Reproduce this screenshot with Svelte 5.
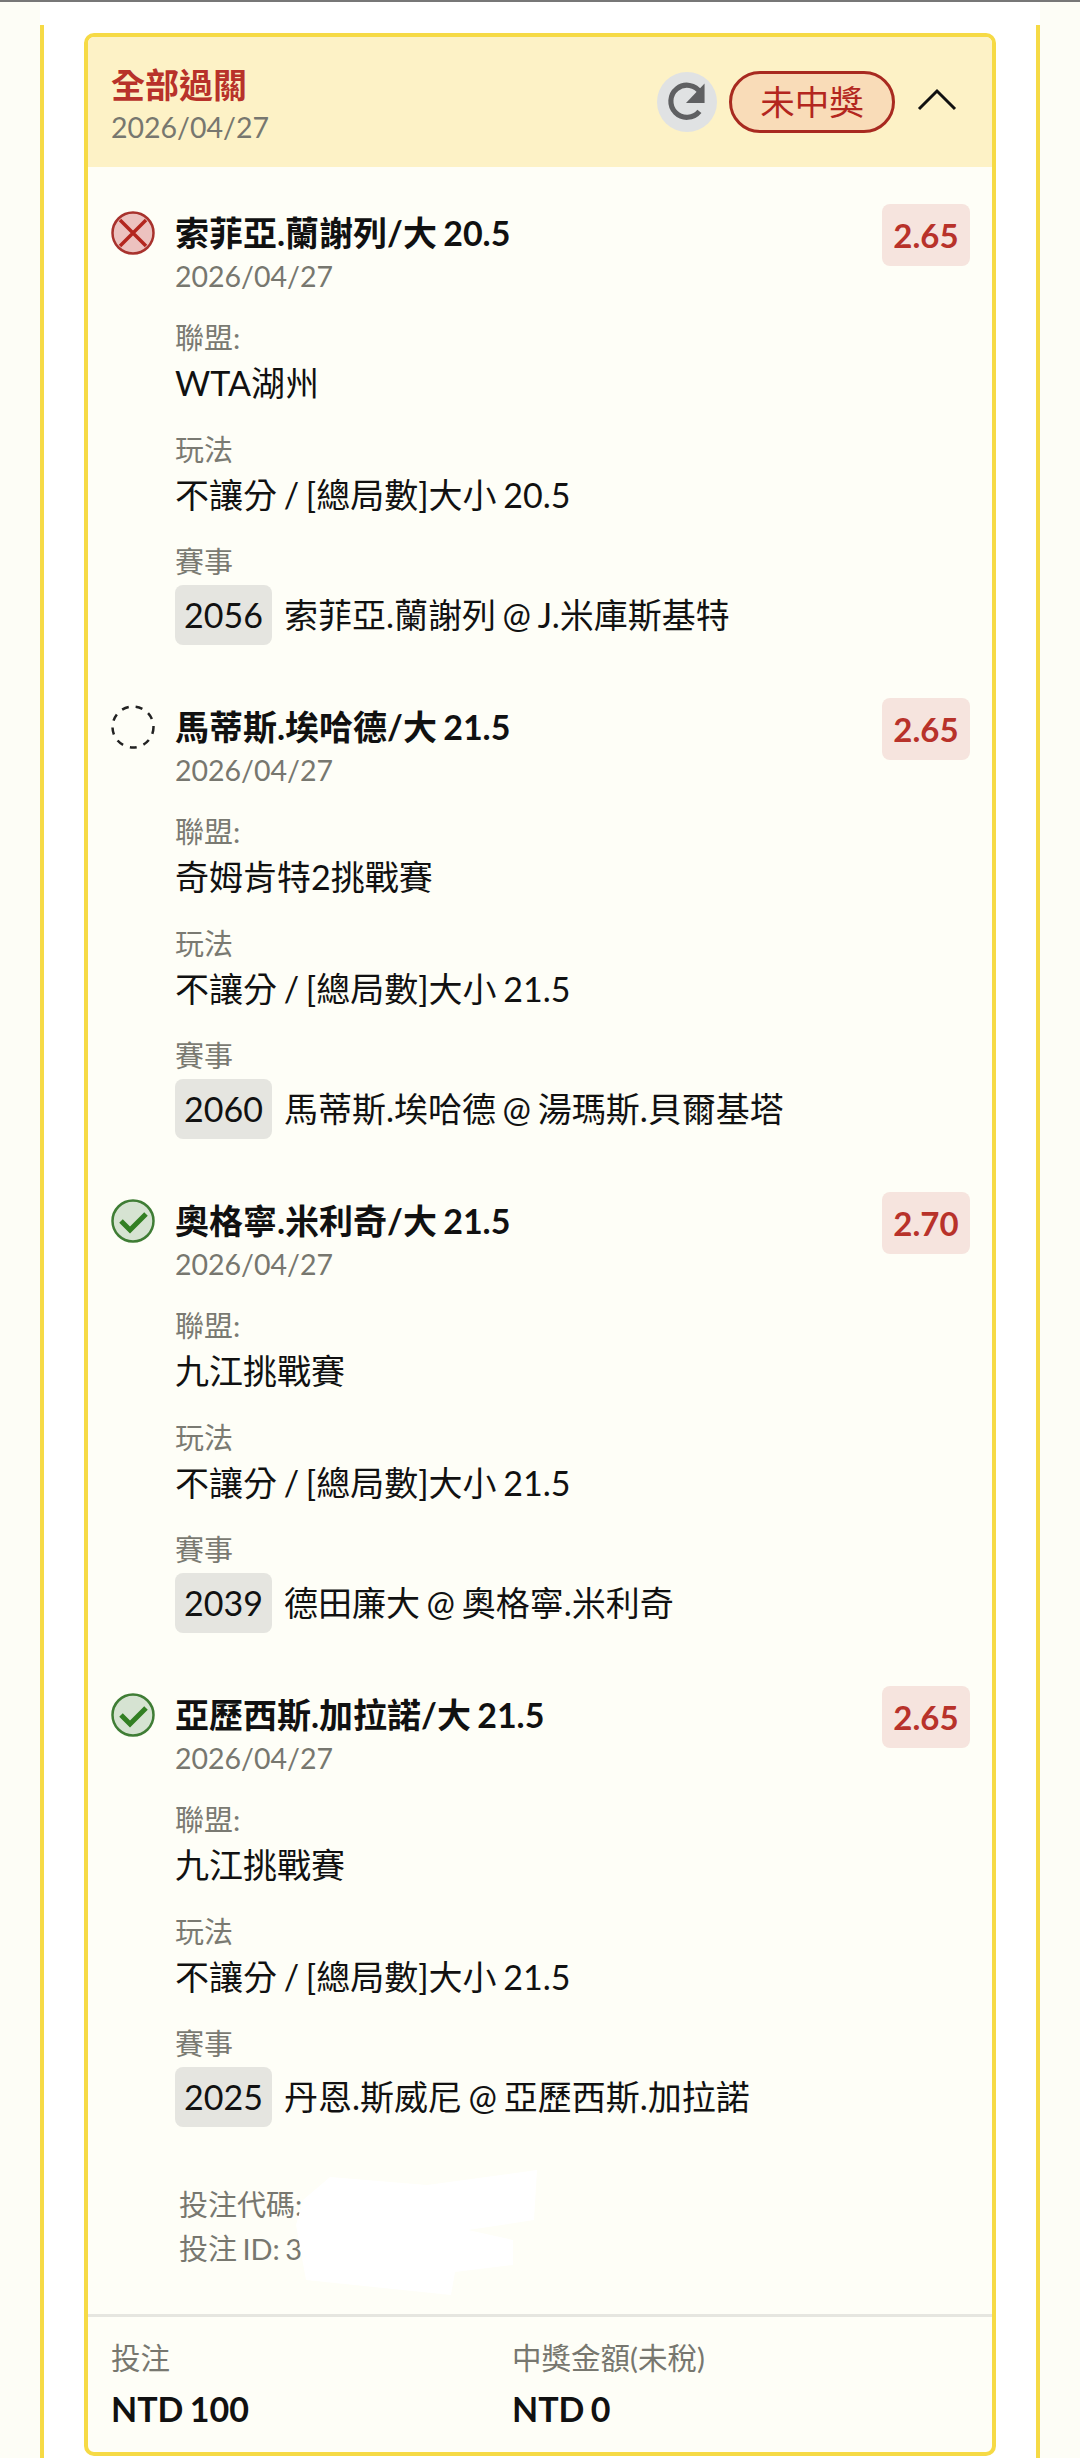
<script>
  const legs = [
    { status: 'lose', title: '索菲亞.蘭謝列/大 20.5', odds: '2.65', league: 'WTA湖州', play: '不讓分 / [總局數]大小 20.5', id: '2056', match: '索菲亞.蘭謝列 @ J.米庫斯基特' },
    { status: 'pending', title: '馬蒂斯.埃哈德/大 21.5', odds: '2.65', league: '奇姆肯特2挑戰賽', play: '不讓分 / [總局數]大小 21.5', id: '2060', match: '馬蒂斯.埃哈德 @ 湯瑪斯.貝爾基塔' },
    { status: 'win', title: '奧格寧.米利奇/大 21.5', odds: '2.70', league: '九江挑戰賽', play: '不讓分 / [總局數]大小 21.5', id: '2039', match: '德田廉大 @ 奧格寧.米利奇' },
    { status: 'win', title: '亞歷西斯.加拉諾/大 21.5', odds: '2.65', league: '九江挑戰賽', play: '不讓分 / [總局數]大小 21.5', id: '2025', match: '丹恩.斯威尼 @ 亞歷西斯.加拉諾' }
  ];
</script>

<div class="page">
  <div class="panel">
    <section class="card">
      <header class="head">
        <div>
          <div class="type">全部過關</div>
          <div class="date">2026/04/27</div>
        </div>
        <div class="actions">
          <span class="refresh">
            <svg viewBox="0 0 58 58" width="60" height="60"><path d="M41 38a15.5 15.5 0 1 1 1-18" fill="none" stroke="#5f6062" stroke-width="5"/><path d="M46 11v19H28z" fill="#5f6062"/></svg>
          </span>
          <span class="badge">未中獎</span>
          <svg class="chev" viewBox="0 0 40 24" width="40" height="24"><path d="M2 21 20 3l18 18" fill="none" stroke="#111" stroke-width="3"/></svg>
        </div>
      </header>

      <div class="legs">
        {#each legs as leg}
          <article class="leg">
            <div class="icon">
              {#if leg.status === 'lose'}
                <svg viewBox="0 0 44 44" width="44" height="44"><circle cx="22" cy="22" r="20.5" fill="#ecc2bf" stroke="#a8322d" stroke-width="2.5"/><path d="M9 9l26 26M35 9 9 35" stroke="#b3261e" stroke-width="3.5" fill="none"/></svg>
              {:else if leg.status === 'win'}
                <svg viewBox="0 0 44 44" width="44" height="44"><circle cx="22" cy="22" r="20.5" fill="#d6e3d2" stroke="#3f7d35" stroke-width="2.5"/><path d="M10 22l9 9 16-16" stroke="#327f23" stroke-width="5" fill="none"/></svg>
              {:else}
                <svg viewBox="0 0 44 44" width="44" height="44"><circle cx="22" cy="22" r="20.5" fill="none" stroke="#222" stroke-width="2.5" stroke-dasharray="7 7.1"/></svg>
              {/if}
            </div>
            <div class="main">
              <div class="title-row">
                <div>
                  <h3>{leg.title}</h3>
                  <div class="date">2026/04/27</div>
                </div>
                <span class="odds">{leg.odds}</span>
              </div>
              <div class="label">聯盟:</div>
              <div class="value">{leg.league}</div>
              <div class="label">玩法</div>
              <div class="value">{leg.play}</div>
              <div class="label">賽事</div>
              <div class="match"><span class="num">{leg.id}</span><span>{leg.match}</span></div>
            </div>
          </article>
        {/each}
      </div>

      <div class="codes">
        <div>投注代碼:</div>
        <div>投注 ID: 3</div>
        <div class="mask"></div>
      </div>

      <footer class="foot">
        <div class="col">
          <div class="f-label">投注</div>
          <div class="f-value">NTD 100</div>
        </div>
        <div class="col">
          <div class="f-label">中獎金額(未稅)</div>
          <div class="f-value">NTD 0</div>
        </div>
      </footer>
    </section>
  </div>
</div>

<style>
  :global(body) {
    margin: 0;
    background: #fff;
  }
  .page {
    height: 2458px;
    box-sizing: border-box;
    overflow: hidden;
    border-top: 2px solid #777;
    padding-top: 23px;
    font-family: Lato, "Noto Sans CJK TC", sans-serif;
    color: #111;
    word-spacing: -2px;
    background: linear-gradient(90deg, #fdfdf6 40px, #fff 40px, #fff 1040px, #fdfdf6 1040px);
  }
  .panel {
    margin: 0 40px;
    padding: 8px 40px 0;
    border-left: 4px solid #f6da45;
    border-right: 4px solid #f6da45;
    height: 2440px;
    box-sizing: border-box;
    background: #fff;
  }
  .card {
    height: 2423px;
    box-sizing: border-box;
    border: 4px solid #f6da45;
    border-radius: 10px;
    background: #fefef7;
    display: flex;
    flex-direction: column;
  }
  .head {
    height: 130px;
    flex: none;
    box-sizing: border-box;
    padding: 26px 35px 0 23px;
    background: #fdf2c6;
    display: flex;
    justify-content: space-between;
    align-items: flex-start;
    border-radius: 6px 6px 0 0;
  }
  .type {
    font-size: 34px;
    line-height: 44px;
    font-weight: 700;
    color: #b8322a;
  }
  .date {
    font-size: 28.5px;
    line-height: 36px;
    color: #77776f;
    margin-top: 3px;
  }
  .head .date {
    margin-top: 2px;
  }
  .actions {
    display: flex;
    align-items: center;
    gap: 12px;
    margin-top: 8px;
  }
  .refresh {
    width: 60px;
    height: 60px;
    border-radius: 50%;
    background: #e0e2e3;
    display: block;
  }
  .refresh svg {
    display: block;
  }
  .badge {
    width: 166px;
    height: 62px;
    box-sizing: border-box;
    border: 3px solid #a82a20;
    border-radius: 31px;
    background: #f9dcb8;
    color: #b3261e;
    font-size: 34.5px;
    line-height: 56px;
    text-align: center;
  }
  .chev {
    margin: -5px 0 0 10px;
  }
  .legs {
    padding: 36px 0 0 23px;
    display: flex;
    flex-direction: column;
    gap: 36px;
  }
  .leg {
    display: flex;
    gap: 20px;
    height: 458px;
  }
  .icon {
    flex: none;
    width: 44px;
    padding-top: 8px;
  }
  .icon svg {
    display: block;
  }
  .main {
    flex: 1;
    padding-right: 22px;
  }
  .title-row {
    display: flex;
    justify-content: space-between;
    align-items: flex-start;
    height: 90px;
  }
  h3 {
    margin: 8px 0 0;
    font-size: 34px;
    line-height: 44px;
    font-weight: 700;
  }
  .odds {
    width: 88px;
    height: 62px;
    margin-top: 1px;
    background: #f6e4de;
    color: #b8322a;
    border-radius: 8px;
    font-size: 33px;
    font-weight: 700;
    line-height: 62px;
    text-align: center;
  }
  .label {
    margin-top: 25px;
    font-size: 29px;
    line-height: 40px;
    color: #7a7a72;
  }
  .value {
    margin-top: 3px;
    font-size: 34px;
    line-height: 44px;
  }
  .match {
    margin-top: 3px;
    display: flex;
    align-items: center;
    gap: 12px;
    font-size: 34px;
    line-height: 44px;
  }
  .num {
    background: #e5e5e0;
    border-radius: 8px;
    padding: 8px 9px;
  }
  .codes {
    position: relative;
    margin-top: 26px;
    padding: 14px 0 0 91px;
    font-size: 29px;
    line-height: 44px;
    color: #77776f;
    height: 145px;
    box-sizing: border-box;
  }
  .mask {
    position: absolute;
    left: 208px;
    top: 1px;
    width: 241px;
    height: 125px;
    background: #fff;
    clip-path: polygon(34px 7px, 131px 15px, 241px 0, 238px 50px, 172px 60px, 217px 70px, 217px 95px, 159px 102px, 155px 125px, 10px 110px, 0 55px, 7px 30px);
  }
  .foot {
    flex: 1;
    border-top: 3px solid #e6e6e0;
    padding: 21px 23px 0;
    display: flex;
  }
  .col {
    width: 401px;
  }
  .col + .col {
    width: auto;
  }
  .f-label {
    font-size: 29.5px;
    line-height: 40px;
    color: #77776f;
  }
  .f-value {
    margin-top: 10px;
    font-size: 34px;
    line-height: 42px;
    font-weight: 700;
  }
</style>
